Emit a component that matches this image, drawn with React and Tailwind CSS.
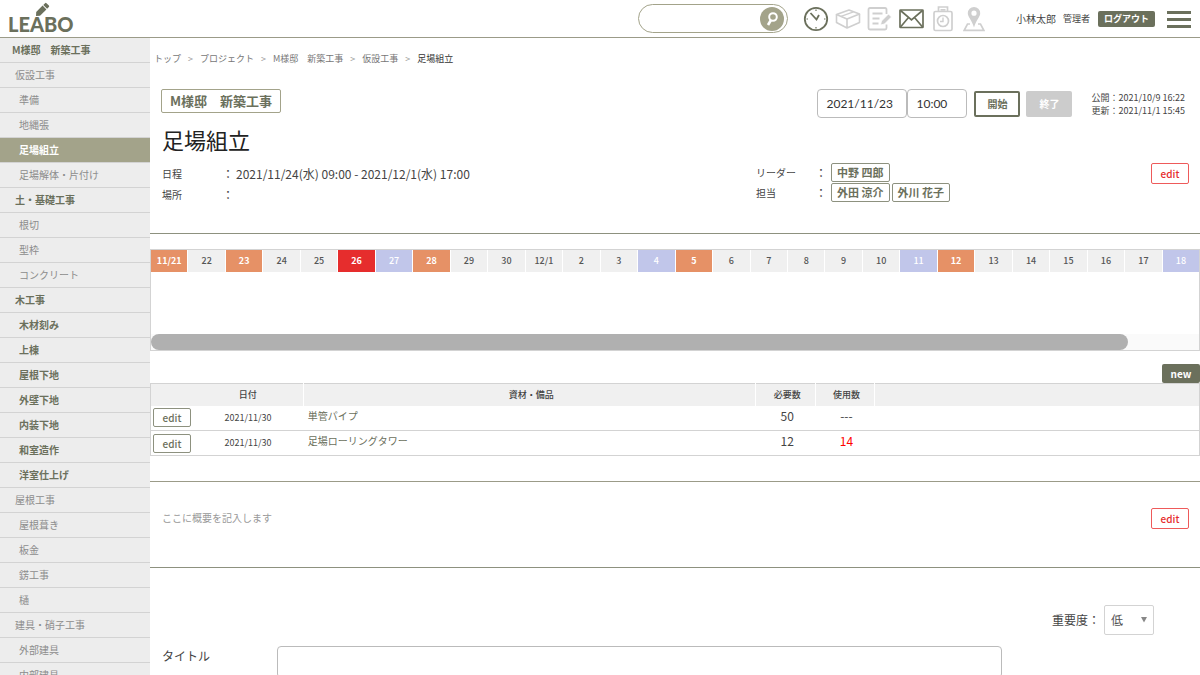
import { useState } from 'react'

const MENU = [
  { label: 'M様邸　新築工事', level: 0, bold: true },
  { label: '仮設工事', level: 1 },
  { label: '準備', level: 2 },
  { label: '地縄張', level: 2 },
  { label: '足場組立', level: 2, active: true },
  { label: '足場解体・片付け', level: 2 },
  { label: '土・基礎工事', level: 1, bold: true },
  { label: '根切', level: 2 },
  { label: '型枠', level: 2 },
  { label: 'コンクリート', level: 2 },
  { label: '木工事', level: 1, bold: true },
  { label: '木材刻み', level: 2, bold: true },
  { label: '上棟', level: 2, bold: true },
  { label: '屋根下地', level: 2, bold: true },
  { label: '外壁下地', level: 2, bold: true },
  { label: '内装下地', level: 2, bold: true },
  { label: '和室造作', level: 2, bold: true },
  { label: '洋室仕上げ', level: 2, bold: true },
  { label: '屋根工事', level: 1 },
  { label: '屋根葺き', level: 2 },
  { label: '板金', level: 2 },
  { label: '錺工事', level: 2 },
  { label: '樋', level: 2 },
  { label: '建具・硝子工事', level: 1 },
  { label: '外部建具', level: 2 },
  { label: '内部建具', level: 2 },
]

const INDENT = ['pl-3', 'pl-[15px]', 'pl-[19px]']

const CRUMBS = ['トップ', 'プロジェクト', 'M様邸　新築工事', '仮設工事', '足場組立']

const DAYS = [
  '11/21', '22', '23', '24', '25', '26', '27', '28', '29', '30', '12/1', '2', '3', '4',
  '5', '6', '7', '8', '9', '10', '11', '12', '13', '14', '15', '16', '17', '18',
]
const HOLIDAYS = ['11/21', '23', '28', '5', '12']
const SATURDAYS = ['27', '4', '11', '18']
const TODAY = '26'

const MATERIALS = [
  { id: 1, date: '2021/11/30', name: '単管パイプ', need: '50', used: '---' },
  { id: 2, date: '2021/11/30', name: '足場ローリングタワー', need: '12', used: '14', over: true },
]

function dayClass(day) {
  if (day === TODAY) return 'bg-[#e62d2d] text-white font-bold'
  if (HOLIDAYS.includes(day)) return 'bg-[#e69166] text-white font-bold'
  if (SATURDAYS.includes(day)) return 'bg-[#c1c6ea] text-white font-medium'
  return 'bg-[#f0f0f0] text-[#555] font-medium'
}

function Logo() {
  return (
    <a href="#" aria-label="LEABO" className="block self-start">
      <svg width="70" height="37" viewBox="0 0 70 37" fill="#6b705c">
        <text x="0" y="32" fontFamily="Lato, sans-serif" fontWeight="900" fontSize="20">LEABO</text>
        <g transform="translate(28 16) rotate(-45)">
          <path d="M0 0 L3 -2.7 H12 V2.7 H3 Z" />
          <path d="M13 -2.7 H15.5 Q16.5 -2.7 16.5 -1.7 V1.7 Q16.5 2.7 15.5 2.7 H13 Z" />
        </g>
      </svg>
    </a>
  )
}

function ClockIcon() {
  return (
    <svg width="26" height="26" viewBox="0 0 26 26" fill="none" stroke="#6b705c">
      <circle cx="13" cy="13" r="11.2" strokeWidth="1.8" />
      <path d="M7.5 7 L13.5 13.5 L16 9" strokeWidth="1.8" />
      <path d="M13 3.5V5M13 21v1.5M3.5 13H5M21 13h1.5" strokeWidth="1.2" />
    </svg>
  )
}

function BoxIcon() {
  return (
    <svg width="26" height="22" viewBox="0 0 26 22" fill="none" stroke="#cfcfcf" strokeWidth="1.6" strokeLinejoin="round">
      <path d="M1.5 6.5 L14 2 L24.5 6 L12 11 Z" />
      <path d="M1.5 6.5 V14.5 L12 20 L24.5 14.5 V6 M12 11 V20" />
      <path d="M6 8.4 L18.5 3.8" strokeWidth="1.4" />
    </svg>
  )
}

function NoteIcon() {
  return (
    <svg width="26" height="26" viewBox="0 0 26 26" fill="none" stroke="#cfcfcf" strokeWidth="1.8">
      <path d="M19.5 8 V3.5 Q19.5 2 18 2 H3 Q1.5 2 1.5 3.5 V22 Q1.5 23.5 3 23.5 H18 Q19.5 23.5 19.5 22 V18.5" />
      <path d="M5.5 7.5H15.5M5.5 12.5H12.5M5.5 17.5H11.5" />
      <path d="M13.5 19 L14.5 15 L21.5 8 L24.5 11 L17.5 18 Z" fill="#cfcfcf" stroke="#fff" strokeWidth="0.8" />
    </svg>
  )
}

function MailIcon() {
  return (
    <svg width="25" height="20" viewBox="0 0 25 20" fill="none" stroke="#6b705c" strokeWidth="1.7">
      <rect x="1" y="1" width="23" height="17.5" rx="0.5" />
      <path d="M1.5 1.5 L12.5 11 L23.5 1.5 M1.5 18 L9.5 8.5 M23.5 18 L15.5 8.5" />
    </svg>
  )
}

function TimeCardIcon() {
  return (
    <svg width="20" height="26" viewBox="0 0 20 26" fill="none" stroke="#cfcfcf" strokeWidth="1.7">
      <rect x="1" y="5.5" width="18" height="19" rx="1.5" />
      <path d="M5.5 5.5 V1 H14.5 V5.5 M7.5 3.8H12.5" />
      <circle cx="10" cy="15" r="5.5" />
      <path d="M10 11.5 V15.5 H7" strokeWidth="1.4" />
    </svg>
  )
}

function MapPinIcon() {
  return (
    <svg width="22" height="26" viewBox="0 0 22 26" fill="none" stroke="#cfcfcf" strokeWidth="1.7">
      <path d="M7 18 H4.5 L1.2 24.3 H20.8 L17.5 18 H15" />
      <path fillRule="evenodd" d="M11 1 A6.2 6.2 0 0 0 4.8 7.2 C4.8 11 9 14 11 21.5 C13 14 17.2 11 17.2 7.2 A6.2 6.2 0 0 0 11 1 Z M11 4.6 a2.6 2.6 0 1 1 0 5.2 a2.6 2.6 0 1 1 0 -5.2 Z" fill="#cfcfcf" stroke="none" />
    </svg>
  )
}

function Header() {
  return (
    <header className="flex h-[38px] shrink-0 items-center border-b border-[#9b9b88] pl-2 pr-[9px]">
      <Logo />
      <form className="ml-auto flex h-[29px] w-[150px] items-center rounded-full border border-[#a3a38a] pr-[3px]">
        <input aria-label="検索" className="min-w-0 flex-1 bg-transparent pl-3 text-xs outline-none" />
        <button type="button" aria-label="検索する" className="flex size-6 items-center justify-center rounded-full bg-[#a3a38a]">
          <svg width="16" height="18" viewBox="0 0 16 18" fill="none" stroke="#fff">
            <circle cx="9" cy="7" r="3.8" strokeWidth="2" />
            <path d="M7 10 L4 15" strokeWidth="2.6" />
          </svg>
        </button>
      </form>
      <nav className="ml-[15px] flex items-center gap-[6px]">
        <a href="#" aria-label="履歴"><ClockIcon /></a>
        <a href="#" aria-label="資材"><BoxIcon /></a>
        <a href="#" aria-label="日報"><NoteIcon /></a>
        <a href="#" aria-label="メッセージ"><MailIcon /></a>
        <a href="#" aria-label="勤怠" className="ml-[3px]"><TimeCardIcon /></a>
        <a href="#" aria-label="地図" className="ml-1"><MapPinIcon /></a>
      </nav>
      <span className="ml-[31px] text-[10px]">小林太郎</span>
      <span className="ml-[7px] text-[9px]">管理者</span>
      <button className="ml-2 h-4 rounded-xs bg-[#6b705c] px-[6px] text-[9px] leading-4 font-bold text-white">ログアウト</button>
      <button aria-label="メニュー" className="ml-3 flex w-6 flex-col gap-1 pt-px">
        <span className="h-[3px] bg-[#6b705c]" />
        <span className="h-[3px] bg-[#6b705c]" />
        <span className="h-[3px] bg-[#6b705c]" />
      </button>
    </header>
  )
}

function Sidebar() {
  return (
    <nav className="w-[150px] shrink-0 overflow-hidden bg-[#ededed]">
      {MENU.map((item) => (
        <a
          key={item.label}
          href="#"
          className={`block h-[25px] border-b border-[#d3d3d3] text-[10px] leading-6 ${INDENT[item.level]} ${
            item.active ? 'bg-[#a3a38a] font-bold text-white' : item.bold ? 'font-bold text-[#6b705c]' : 'text-[#8c8c8c]'
          }`}
        >
          {item.label}
        </a>
      ))}
    </nav>
  )
}

function EditButton({ red }) {
  return (
    <button
      className={`block w-[38px] rounded-xs border bg-white text-[10px] font-medium ${
        red ? 'h-[21px] border-[#ee5a5a] leading-[19px] text-[#e62d2d]' : 'h-[19px] border-[#8d917f] leading-[17px] text-[#6b705c]'
      }`}
    >
      edit
    </button>
  )
}

function NameTag({ children }) {
  return (
    <a href="#" className="h-[19px] rounded-xs border border-[#8d917f] px-[5px] text-[11px] leading-[17px] font-bold text-[#6b705c]">
      {children}
    </a>
  )
}

function Summary() {
  const [date, setDate] = useState('2021/11/23')
  const [time, setTime] = useState('10:00')

  return (
    <section className="border-b border-[#8d917f] pr-[11px] pb-7">
      <ol className="flex h-[27px] items-end gap-[7px] pl-1 text-[9px] text-[#777]">
        {CRUMBS.map((crumb, i) => (
          <li key={crumb} className="flex items-center gap-[7px] leading-3">
            {i > 0 && <span className="text-[#999]">&gt;</span>}
            {i < CRUMBS.length - 1 ? <a href="#">{crumb}</a> : <span className="text-[#333]">{crumb}</span>}
          </li>
        ))}
      </ol>

      <div className="mt-6 flex items-start justify-between pr-1 pl-[11px]">
        <a href="#" className="h-6 rounded-xs border border-[#a3a38a] px-2 text-[13px] leading-[22px] font-bold text-[#6b705c]">
          M様邸　新築工事
        </a>
        <div className="flex items-center">
          <input
            aria-label="日付"
            value={date}
            onChange={(e) => setDate(e.target.value)}
            className="h-[29px] w-[90px] rounded-sm border border-[#bbb] px-2 font-['Lato'] text-xs text-[#333]"
          />
          <input
            aria-label="時刻"
            value={time}
            onChange={(e) => setTime(e.target.value)}
            className="h-[29px] w-[60px] rounded-sm border border-[#bbb] px-2 font-['Lato'] text-xs text-[#333]"
          />
          <button className="ml-[7px] h-[26px] w-[46px] rounded-xs border-2 border-[#6b705c] text-[10px] font-bold text-[#6b705c]">開始</button>
          <button className="ml-[6px] h-[26px] w-[46px] rounded-xs bg-[#cccccc] text-[10px] font-bold text-white">終了</button>
          <p className="ml-[19px] text-[9px] leading-[13px]">
            公開：2021/10/9 16:22
            <br />
            更新：2021/11/1 15:45
          </p>
        </div>
      </div>

      <h1 className="mt-[5px] pl-3 text-[22px] leading-[33px] font-normal text-[#222]">足場組立</h1>

      <div className="mt-[7px] grid grid-cols-[595fr_395fr_auto] items-start pl-[11px]">
        <dl className="grid grid-cols-[60px_14px_auto] items-center pl-px leading-[21px]">
          <dt className="text-[10px]">日程</dt>
          <dd className="text-xs">：</dd>
          <dd className="text-xs">2021/11/24(水) 09:00 - 2021/12/1(水) 17:00</dd>
          <dt className="text-[10px]">場所</dt>
          <dd className="text-xs">：</dd>
          <dd />
        </dl>
        <dl className="grid grid-cols-[59px_16px_auto] items-center text-[10px] leading-5">
          <dt>リーダー</dt>
          <dd className="text-xs leading-5">：</dd>
          <dd className="flex h-5 gap-[2px]"><NameTag>中野 四郎</NameTag></dd>
          <dt>担当</dt>
          <dd className="text-xs leading-5">：</dd>
          <dd className="flex h-5 gap-[2px]">
            <NameTag>外田 涼介</NameTag>
            <NameTag>外川 花子</NameTag>
          </dd>
        </dl>
        <EditButton red />
      </div>
    </section>
  )
}

function Schedule() {
  return (
    <section className="mt-[15px] border border-[#d3d3d3]">
      <div className="flex gap-px">
        {DAYS.map((day) => (
          <div key={day} className={`h-[22px] min-w-0 flex-1 text-center text-[9px] leading-[22px] ${dayClass(day)}`}>
            {day}
          </div>
        ))}
      </div>
      <div className="h-[62px]" />
      <div className="h-4 bg-[#fafafa]">
        <div className="h-4 w-[93.2%] rounded-full bg-[#b0b0b0]" />
      </div>
    </section>
  )
}

function Materials() {
  return (
    <section className="border-b border-[#9b9b88] pt-[13px] pb-[25px]">
      <div className="flex justify-end">
        <button className="h-[19px] w-[38px] rounded-xs bg-[#6b705c] text-[10px] leading-[19px] font-bold text-white">new</button>
      </div>
      <table className="w-full table-fixed border border-[#d3d3d3] text-center">
        <colgroup>
          <col className="w-[4%]" />
          <col className="w-[10.6%]" />
          <col className="w-[43.1%]" />
          <col className="w-[5.7%]" />
          <col className="w-[5.6%]" />
          <col />
        </colgroup>
        <thead>
          <tr className="h-[22px] bg-[#f0f0f0] text-[9px]">
            <th />
            <th className="p-0 font-medium">日付</th>
            <th className="border-l border-white p-0 pl-[3px] font-medium">資材・備品</th>
            <th className="border-l border-white p-0 pl-[3px] font-medium">必要数</th>
            <th className="border-l border-white p-0 pl-[3px] font-medium">使用数</th>
            <th className="border-l border-white" />
          </tr>
        </thead>
        <tbody>
          {MATERIALS.map((m) => (
            <tr key={m.id} className="h-[25px] border-b border-[#d3d3d3] leading-5">
              <td className="p-0 pl-[2px]"><EditButton /></td>
              <td className="p-0 text-[9px]">{m.date}</td>
              <td className="p-0 pl-1 text-left align-top text-[10px] leading-5 text-[#6b705c]">
                <a href="#">{m.name}</a>
              </td>
              <td className="p-0 pl-[3px] align-top text-xs leading-5">{m.need}</td>
              <td className={`p-0 pl-[3px] align-top text-xs leading-5 ${m.over ? 'text-[#ff0000]' : ''}`}>{m.used}</td>
              <td />
            </tr>
          ))}
        </tbody>
      </table>
    </section>
  )
}

function Outline() {
  return (
    <section className="flex h-[86px] items-start justify-between border-b border-[#8d917f] pt-[26px] pr-[11px] pl-3">
      <p className="text-[10px] leading-5 text-[#999]">ここに概要を記入します</p>
      <EditButton red />
    </section>
  )
}

function PostForm() {
  return (
    <form className="pt-[37px] pl-3 text-xs">
      <div className="flex items-center justify-end pr-[46px]">
        <label htmlFor="priority">重要度：</label>
        <div className="relative ml-1">
          <select id="priority" defaultValue="低" className="h-[30px] w-[50px] appearance-none rounded-xs border border-[#d3d3d3] bg-white pl-[6px] text-[#555]">
            <option>低</option>
            <option>中</option>
            <option>高</option>
          </select>
          <svg className="pointer-events-none absolute top-3 right-[7px]" width="6" height="6" viewBox="0 0 6 6" fill="#888">
            <path d="M0 0H6L3 5.5Z" />
          </svg>
        </div>
      </div>
      <div className="mt-[11px] flex items-start">
        <label htmlFor="title" className="w-[115px] leading-5">タイトル</label>
        <input id="title" className="mr-[198px] h-8 min-w-0 flex-1 rounded-sm border border-[#bbb] px-2" />
      </div>
    </form>
  )
}

export default function App() {
  return (
    <div className="flex h-screen flex-col overflow-hidden bg-white font-['Noto_Sans_CJK_JP',sans-serif] text-[#444]">
      <Header />
      <div className="flex min-h-0 flex-1">
        <Sidebar />
        <main className="min-w-0 flex-1 overflow-hidden">
          <Summary />
          <Schedule />
          <Materials />
          <Outline />
          <PostForm />
        </main>
      </div>
    </div>
  )
}
